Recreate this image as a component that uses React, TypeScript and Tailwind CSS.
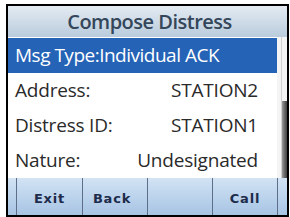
import React from "react";

const font = { fontFamily: '"Open Sans", "Noto Sans", sans-serif' };

function Row({ label, value }: { label: string; value: string }) {
  return (
    <div className="h-[35px] flex items-center justify-between pl-[7px] pr-[19px] text-[19px] font-medium text-[#2a2a2a] tracking-[-0.2px]">
      <span>{label}</span>
      <span>{value}</span>
    </div>
  );
}

export default function App() {
  return (
    <div className="w-[290px] h-[217px] bg-white pt-[4px] pl-[6px]" style={font}>
      <div className="w-[283px] h-[213px] border-2 border-black flex flex-col overflow-hidden">
        <div className="h-[31px] bg-gradient-to-b from-[#e4ebf2] to-[#b9cbdc] flex items-center justify-center pl-[4px] text-[20px] font-semibold text-[#34465a] tracking-[-0.5px]">
          Compose Distress
        </div>
        <div className="flex h-[141px]">
          <div className="flex-1 flex flex-col pt-[1px]">
            <div className="h-[35px] bg-[#2563b6] text-white flex items-center pl-[7px] text-[19px] font-medium tracking-[-0.5px]">
              Msg Type:Individual ACK
            </div>
            <Row label="Address:" value="STATION2" />
            <Row label="Distress ID:" value="STATION1" />
            <Row label="Nature:" value="Undesignated" />
          </div>
          <div className="w-[10px] flex bg-[#f4f4f4]">
            <div className="w-[4px]" />
            <div className="w-[1px] bg-[#d0d0d0]" />
            <div className="flex-1 flex flex-col">
              <div className="h-[64px]" />
              <div className="flex-1 bg-gradient-to-r from-[#9a9a9a] to-[#404040]" />
            </div>
          </div>
        </div>
        <div
          className="flex-1 flex bg-gradient-to-b from-[#d2e3f4] to-[#a7c4e4] text-[13px] font-bold text-[#1d2c4a] tracking-[0.8px]"
          style={{ fontFamily: '"DejaVu Sans", sans-serif' }}
        >
          <div className="w-[9px] border-r border-[#5d6f88]" />
          <div className="w-[66px] border-r border-[#5d6f88] flex items-center justify-center pt-[5px]">Exit</div>
          <div className="w-[65px] border-r border-[#5d6f88] flex items-center justify-center pt-[5px] pr-[6px]">Back</div>
          <div className="w-[65px] border-r border-[#5d6f88]" />
          <div className="w-[65px] border-r border-[#5d6f88] flex items-center justify-center pt-[5px]">Call</div>
          <div className="flex-1" />
        </div>
      </div>
    </div>
  );
}
